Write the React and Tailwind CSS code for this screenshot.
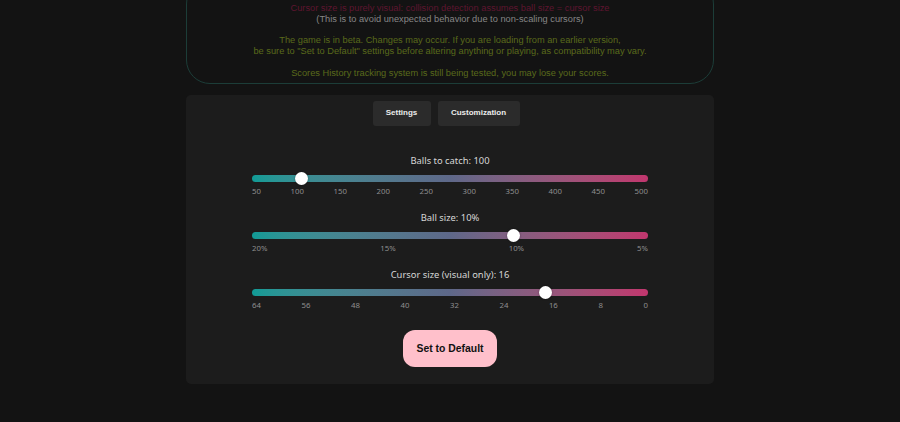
import React from "react";

const sliders = [
  {
    title: "Balls to catch: 100",
    frac: 50 / 450,
    ticks: ["50", "100", "150", "200", "250", "300", "350", "400", "450", "500"],
  },
  {
    title: "Ball size: 10%",
    frac: 10 / 15,
    ticks: ["20%", "15%", "10%", "5%"],
  },
  {
    title: "Cursor size (visual only): 16",
    frac: 48 / 64,
    ticks: ["64", "56", "48", "40", "32", "24", "16", "8", "0"],
  },
];

function Slider({ title, frac, ticks, first }) {
  return (
    <div className={first ? "" : "mt-[12.5px]"}>
      <div className="text-center text-[9.4px] leading-[15px] text-[#d6d6d6]">{title}</div>
      <div className="relative mt-[4px] h-[13px] flex items-center">
        <div className="h-[7px] w-full rounded-full bg-linear-to-r from-[#0f9b96] via-[#5e6889] to-[#c1366e]" />
        <div
          className="absolute top-0 h-[13px] w-[13px] rounded-full bg-white shadow-[0_0_2px_rgba(0,0,0,0.4)]"
          style={{ left: `${frac * 383}px` }}
        />
      </div>
      <div className="mt-[0.5px] flex justify-between text-[7.8px] leading-[12px] text-[#8e8e8e]">
        {ticks.map((t) => (
          <span key={t}>{t}</span>
        ))}
      </div>
    </div>
  );
}

export default function App() {
  return (
    <div className="min-h-screen bg-[#131313] flex flex-col items-center">
      {/* notice box, scrolled partly out of view */}
      <div
        className="w-[528px] -mt-[20px] pt-[22.4px] pb-[4.6px] border border-[#1c3d38] rounded-[24px] text-center text-[9.25px] leading-[10.7px]"
        style={{ fontFamily: '"Liberation Sans", Arial, sans-serif' }}
      >
        <p className="text-[#5f1530]">
          Cursor size is purely visual: collision detection assumes ball size = cursor size
        </p>
        <p className="text-[#868686]">
          (This is to avoid unexpected behavior due to non-scaling cursors)
        </p>
        <p className="mt-[10.7px] text-[#5a6a1b]">
          The game is in beta. Changes may occur. If you are loading from an earlier version,
        </p>
        <p className="text-[#5a6a1b]">
          be sure to "Set to Default" settings before altering anything or playing, as compatibility may vary.
        </p>
        <p className="mt-[10.7px] text-[#5a6a1b]">
          Scores History tracking system is still being tested, you may lose your scores.
        </p>
      </div>

      {/* settings panel */}
      <div className="mt-[11px] w-[528px] bg-[#1c1c1c] rounded-[5px] pt-[6px] pb-[17px] flex flex-col items-center">
        <div
          className="mr-[8px] flex gap-[7px]"
          style={{ fontFamily: '"Liberation Sans", Arial, sans-serif' }}
        >
          <button className="h-[25px] w-[58px] rounded-[3px] bg-[#2b2b2b] text-[8px] font-bold text-[#ececec]">
            Settings
          </button>
          <button className="h-[25px] w-[82px] rounded-[3px] bg-[#2b2b2b] text-[8px] font-bold text-[#ececec]">
            Customization
          </button>
        </div>

        <div
          className="mt-[27px] w-[396px]"
          style={{ fontFamily: '"Noto Sans", "Open Sans", sans-serif' }}
        >
          {sliders.map((s, i) => (
            <Slider key={s.title} {...s} first={i === 0} />
          ))}
        </div>

        <button
          className="mt-[19px] h-[37px] w-[94px] rounded-[12px] bg-[#ffc0cb] text-[10.4px] font-bold text-[#111]"
          style={{ fontFamily: '"Liberation Sans", Arial, sans-serif' }}
        >
          Set to Default
        </button>
      </div>
    </div>
  );
}
